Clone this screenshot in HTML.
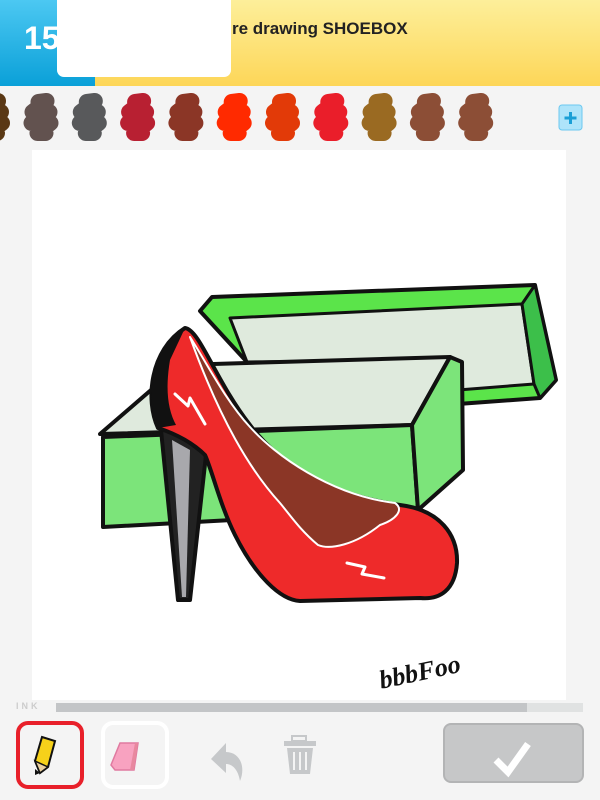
<!DOCTYPE html>
<html><head><style>
body{margin:0;width:600px;height:800px;background:#f4f4f4;font-family:"Liberation Sans",sans-serif;position:relative;overflow:hidden}
.abs{position:absolute}
</style></head><body>
<div class="abs" style="left:0;top:0;width:95px;height:86px;background:linear-gradient(#4cc8f2,#0aa0d8)"></div>
<div class="abs" style="left:95px;top:0;width:505px;height:86px;background:linear-gradient(#fdef9a,#fdd658)"></div>
<div class="abs" style="left:24px;top:20px;color:#fff;font-weight:bold;font-size:32px">15</div>
<div class="abs" style="left:57px;top:0;width:174px;height:77px;background:#fff;border-radius:0 0 7px 7px"></div>
<div class="abs" style="left:232px;top:19px;color:#222;font-weight:bold;font-size:17px">re drawing SHOEBOX</div>
<svg class="abs" style="left:0;top:86px" width="600" height="64">
<defs><polyline id="s" points="-2,-16 6,-17 -8,-6 9,-6 -9,5 10,5 -3,15 5,15" fill="none" stroke-width="16" stroke-linejoin="round" stroke-linecap="round"/></defs>
<use href="#s" x="-8" y="32" stroke="#5a3814"/>
<use href="#s" x="40.5" y="32" stroke="#62524f"/>
<use href="#s" x="88.8" y="32" stroke="#58595b"/>
<use href="#s" x="137.1" y="32" stroke="#b82032"/>
<use href="#s" x="185.4" y="32" stroke="#8b3626"/>
<use href="#s" x="233.7" y="32" stroke="#ff2a00"/>
<use href="#s" x="282" y="32" stroke="#e23a08"/>
<use href="#s" x="330.3" y="32" stroke="#ea1e2a"/>
<use href="#s" x="378.6" y="32" stroke="#9a6a22"/>
<use href="#s" x="426.9" y="32" stroke="#8c4e36"/>
<use href="#s" x="475.2" y="32" stroke="#8c4e36"/>
<clipPath id="c"><rect x="520" y="0" width="28" height="64"/></clipPath>
<use href="#s" x="540" y="32" stroke="#8c6040" clip-path="url(#c)"/>
<rect x="559" y="19" width="23" height="25" rx="3" fill="#aee4fa" stroke="#6cc8f0"/>
<path d="M570.5 26v12M564.5 32h12" stroke="#1a9fd6" stroke-width="3"/>
</svg>
<div class="abs" style="left:32px;top:150px;width:534px;height:550px;background:#fff"></div>
<svg class="abs" style="left:32px;top:150px" width="534" height="550">
<g transform="translate(-32,-150)" stroke="#111" stroke-width="4" stroke-linejoin="round">
<polygon points="200,311 212,297 535,285 556,380 540,398 458,404 455,360 247,362" fill="#5be44a"/>
<polygon points="230,318 522,304 534,384 458,390 456,360 247,362" fill="#dfeadd" stroke-width="3"/>
<polygon points="522,304 535,285 556,380 540,398 534,384" fill="#3cbf4a" stroke-width="3"/>
<polygon points="100,434 180,365 450,357 412,425" fill="#dfeadd"/>
<polygon points="103,437 412,425 418,510 103,527" fill="#7ce47a"/>
<polygon points="412,425 450,357 462,362 463,470 418,510" fill="#7ce47a"/>
<path d="M160,420 L178,600 L190,600 L206,455 Z" fill="#222"/>
<path d="M172,440 L182,597 L186,597 L190,450 Z" fill="#a8a8ac" stroke="none"/>
<path d="M185,328 C200,330 215,380 250,425 C280,465 330,495 400,505 C440,510 458,535 457,563 C455,590 440,600 420,598 L300,601 C280,600 255,575 235,535 C220,505 212,470 205,455 C190,440 170,432 158,428 C145,400 150,350 185,328 Z" fill="#ee2a2a"/>
<path d="M190,337 C205,360 225,400 250,427 C275,455 330,495 395,503 C405,510 395,520 380,525 C355,545 330,550 318,545 C300,530 290,515 280,503 C250,470 220,420 190,337 Z" fill="#8b3626" stroke="#fff" stroke-width="2"/>
<path d="M158,428 C145,400 150,350 185,328 L170,360 C165,390 168,410 176,425 Z" fill="#111" stroke="none"/>
<path d="M175,394 L188,406 L190,398 L205,424 M347,563 L365,567 L362,574 L384,578" fill="none" stroke="#fff" stroke-width="3" stroke-linecap="round"/>
</g>
<text x="346" y="532" font-family="Liberation Serif" font-style="italic" font-weight="bold" font-size="26" fill="#111" transform="rotate(-12 380 520)">bbbFoo</text>
</svg>
<div class="abs" style="left:16px;top:701px;font-size:9px;letter-spacing:3px;color:#ccc;font-weight:bold">INK</div>
<div class="abs" style="left:56px;top:703px;width:527px;height:9px;background:#e0e2e2"></div>
<div class="abs" style="left:56px;top:703px;width:471px;height:9px;background:#c3c5c7"></div>
<div class="abs" style="left:16px;top:721px;width:60px;height:60px;border:4px solid #e8202a;border-radius:12px;background:#f4f4f4"></div>
<svg class="abs" style="left:30px;top:733px" width="36" height="52"><polygon points="12,4 25,8 18,34 10,40 5,28" fill="#f6d11a" stroke="#111" stroke-width="2"/><polygon points="5,28 18,34 10,40" fill="#e8cfa0" stroke="#111" stroke-width="1.5"/><polygon points="5,36 10,40 5,42" fill="#111"/></svg>
<div class="abs" style="left:101px;top:721px;width:60px;height:60px;border:4px solid #fff;border-radius:12px"></div>
<svg class="abs" style="left:108px;top:736px" width="40" height="50"><polygon points="12,7 30,7 26,34 7,34 3,29" fill="#f8a2c0" stroke="#e07aa0" stroke-width="1.5"/><polygon points="30,7 26,34 22,34 27,7" fill="#e8889f"/></svg>
<svg class="abs" style="left:206px;top:733px" width="40" height="50"><path d="M5,26 L20,10 L20,19 C34,19 40,34 34,48 C32,36 26,31 20,31 L20,40 Z" fill="#c6c8ca"/></svg>
<svg class="abs" style="left:282px;top:734px" width="36" height="40"><rect x="10" y="2" width="14" height="5" fill="none" stroke="#c6c8ca" stroke-width="2"/><rect x="2" y="7" width="32" height="5" fill="#c6c8ca"/><path d="M5,14 H31 L28,40 H8 Z" fill="#c6c8ca"/><path d="M12,18 V36 M18,18 V36 M24,18 V36" stroke="#f4f4f4" stroke-width="2"/></svg>
<div class="abs" style="left:443px;top:723px;width:137px;height:56px;background:#c6c7c8;border:2px solid #b3b4b5;border-radius:8px"></div>
<svg class="abs" style="left:490px;top:736px" width="48" height="44"><path d="M6,24 L18,36 L38,8" fill="none" stroke="#fff" stroke-width="7"/></svg>
</body></html>
